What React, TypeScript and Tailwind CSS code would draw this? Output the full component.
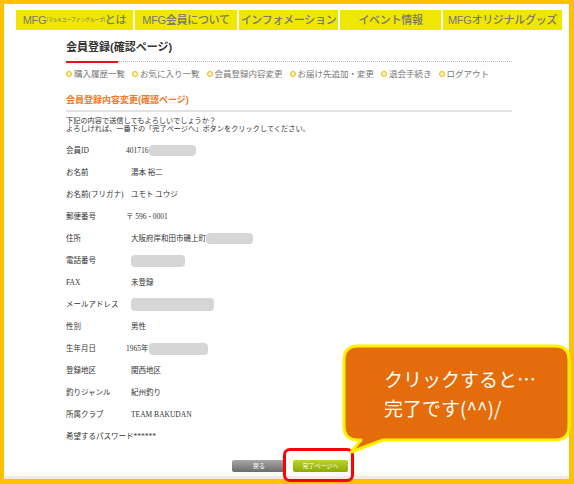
import React from 'react';

const sans = "font-['Liberation_Sans','Noto_Sans_CJK_JP',sans-serif]";

const navItems = [
  { key: 'about', w: 'w-[117px]' },
  { key: 'member', w: 'w-[102px]', label: 'MFG会員について' },
  { key: 'info', w: 'w-[99px]', label: 'インフォメーション' },
  { key: 'event', w: 'w-[101px]', label: 'イベント情報' },
  { key: 'goods', w: 'w-[119px]', label: 'MFGオリジナルグッズ' },
];

const links = ['購入履歴一覧', 'お気に入り一覧', '会員登録内容変更', 'お届け先追加・変更', '退会手続き', 'ログアウト'];

type Row = {
  label: string;
  value?: string;
  pill?: string; // tailwind size classes for the greyed-out part
  shift?: boolean;
};

const rows: Row[] = [
  { label: '会員ID', value: '401716', pill: 'w-[47px] h-[11px]', shift: true },
  { label: 'お名前', value: '湯本 裕二' },
  { label: 'お名前(フリガナ)', value: 'ユモト ユウジ' },
  { label: '郵便番号', value: '〒 596 - 0001', shift: true },
  { label: '住所', value: '大阪府岸和田市磯上町', pill: 'w-[47px] h-[11px]' },
  { label: '電話番号', pill: 'w-[54px] h-[12px]' },
  { label: 'FAX', value: '未登録' },
  { label: 'メールアドレス', pill: 'w-[83px] h-[13px]' },
  { label: '性別', value: '男性' },
  { label: '生年月日', value: '1965年', pill: 'w-[59px] h-[12px]', shift: true },
  { label: '登録地区', value: '関西地区' },
  { label: '釣りジャンル', value: '紀州釣り' },
  { label: '所属クラブ', value: 'TEAM BAKUDAN' },
];

function Bullet() {
  return <span className="w-[6px] h-[6px] rounded-full border-[1.5px] border-[#f6b200] bg-[#fff4c4] shrink-0" />;
}

export default function App() {
  return (
    <div className={`relative w-[574px] h-[484px] bg-[#ffc000] pt-[4px] pl-[4px] pr-[5px] pb-[5px] ${sans}`}>
      <div className="w-full h-full bg-white flex flex-col">
        {/* global nav */}
        <div className="mt-[6px] ml-[12px] flex gap-[2px]">
          {navItems.map((n) => (
            <div
              key={n.key}
              className={`${n.w} h-[20px] bg-[#efe700] flex items-center justify-center text-[11px] text-[#777] font-medium tracking-[-0.3px]`}
            >
              {n.label ?? (
                <>
                  MFG<span className="text-[5px] font-normal">(マルキユーファングループ)</span>とは
                </>
              )}
            </div>
          ))}
        </div>

        <div className="ml-[62px] w-[446px] flex flex-col">
          <h1 className="mt-[9px] h-[16px] leading-[16px] text-[11px] font-bold text-[#333]">会員登録(確認ページ)</h1>
          <div className="mt-[6px] flex items-start">
            <div className="w-[52px] h-[2px] bg-[#e8101a]" />
            <div className="flex-1 border-t border-dotted border-[#bbb]" />
          </div>

          <div className="mt-[5px] h-[12px] flex items-center gap-[7px] text-[8.5px] text-[#777]">
            {links.map((l) => (
              <span key={l} className="flex items-center gap-[2px]">
                <Bullet />
                {l}
              </span>
            ))}
          </div>

          <h2 className="mt-[14px] h-[12px] leading-[12px] text-[9px] font-bold text-[#f07a28]">会員登録内容変更(確認ページ)</h2>
          <div className="mt-[4px] h-[1.5px] bg-[#e2e2e2]" />

          <div className="font-['Liberation_Serif','Noto_Sans_CJK_JP',serif] text-[7.5px] text-[#333]">
            <div className="mt-[4px] text-[7.2px] font-['Noto_Sans_CJK_JP',sans-serif]">
              <p className="h-[8.5px] leading-[8.5px]">下記の内容で送信してもよろしいでしょうか？</p>
              <p className="h-[8.5px] leading-[8.5px]">よろしければ、一番下の「完了ページへ」ボタンをクリックしてください。</p>
            </div>

            <div className="mt-[7px] flex flex-col">
              {rows.map((r) => (
                <div key={r.label} className="h-[22px] flex items-center">
                  <span className="w-[65px] shrink-0">{r.label}</span>
                  <span className={`flex items-center ${r.shift ? '-ml-[5px]' : ''}`}>
                    {r.value}
                    {r.pill && <span className={`${r.pill} rounded-[4px] bg-[#d6d6d6]`} />}
                  </span>
                </div>
              ))}
              <div className="h-[22px] flex items-center">希望するパスワード******</div>
            </div>
          </div>

          <div className="mt-[12px] flex justify-center gap-[7px] pl-[2px]">
            <button className="w-[54px] h-[12px] rounded-[2px] bg-gradient-to-b from-[#a8a8a8] to-[#6c6c6c] text-white text-[6px] leading-[12px]">
              戻る
            </button>
            <button className="w-[55px] h-[12px] rounded-[2px] bg-gradient-to-b from-[#bcd42a] to-[#8ea800] text-white text-[6px] leading-[12px]">
              完了ページへ
            </button>
          </div>
        </div>

        <div className="mt-auto h-[3px] bg-[#ececec]" />
      </div>

      {/* highlight around the submit button */}
      <div className="absolute left-[283px] top-[448px] w-[71px] h-[34px] border-[3px] border-[#ff0000] rounded-[7px]" />

      {/* speech bubble */}
      <svg className="absolute left-0 top-0 pointer-events-none" width="574" height="484" viewBox="0 0 574 484">
        <path
          d="M358 346 H555 Q569 346 569 360 V426 Q569 440 555 440 H383 L351 452 L361 440 H358 Q344 440 344 426 V360 Q344 346 358 346 Z"
          fill="#e46c0a"
          stroke="#fff200"
          strokeWidth="3"
          strokeLinejoin="round"
        />
      </svg>
      <div className="absolute left-[384px] top-[364px] text-white text-[19px] leading-[29px] font-['Noto_Sans_CJK_JP',sans-serif]">
        クリックすると…
        <br />
        完了です(^^)/
      </div>
    </div>
  );
}
